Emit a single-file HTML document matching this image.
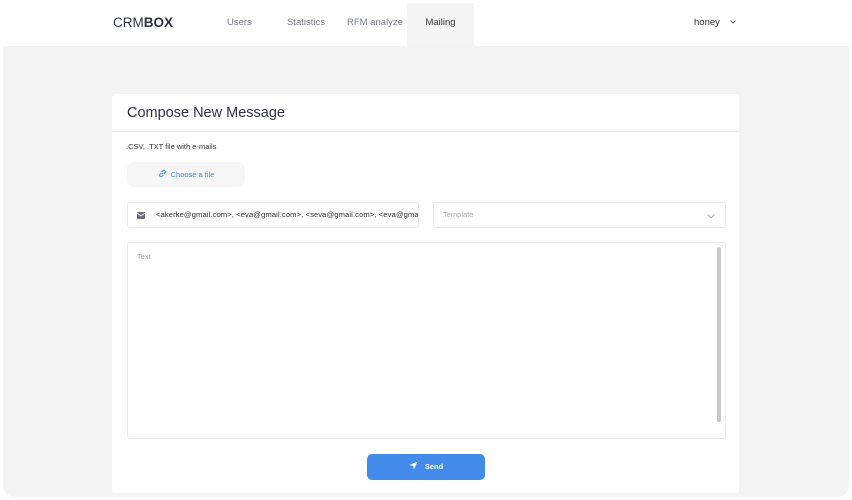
<!DOCTYPE html>
<html><head><style>
*{box-sizing:border-box;margin:0;padding:0}
body{width:852px;height:500px;background:#fff;font-family:"Liberation Sans",sans-serif;position:relative;overflow:hidden;color:#333}
.hdr{position:absolute;left:0;top:0;width:852px;height:46px;background:#fff}
.logo{position:absolute;left:113px;top:15px;font-size:13.5px;color:#2f3142}
.logo b{font-weight:700}
.nav{position:absolute;top:17px;font-size:9.5px;color:#7a7d86}
.mail{position:absolute;left:407px;top:3px;width:67px;height:43px;background:#f4f4f4;font-size:9.5px;color:#333;text-align:center;line-height:39px}
.grey{position:absolute;left:3px;top:46px;width:846px;height:451px;background:#f3f3f3;border-radius:0 0 12px 12px}
.card{position:absolute;left:112px;top:94px;width:627px;height:399px;background:#fff;border-radius:3px}
.title{position:absolute;left:15px;top:11px;font-size:14.5px;color:#2f3142}
.sep{position:absolute;left:0;top:37px;width:627px;height:1px;background:#ececec}
.lbl{position:absolute;left:14px;top:48px;font-size:7.5px;color:#333}
.choose{position:absolute;left:15px;top:68px;width:118px;height:25px;background:#f6f6f6;border-radius:7px;color:#3f8ae8;font-size:7.5px;text-align:center;line-height:25px}
.inp{position:absolute;left:15px;top:108px;width:292px;height:26px;border:1px solid #ececec;border-radius:3px;font-size:7.6px;letter-spacing:0.1px;line-height:24px;padding-left:28px;white-space:nowrap;overflow:hidden;color:#333}
.tpl{position:absolute;left:321px;top:108px;width:293px;height:26px;border:1px solid #ececec;border-radius:3px;font-size:7.5px;line-height:24px;padding-left:9px;color:#aaa}
.txt{position:absolute;left:15px;top:148px;width:599px;height:197px;border:1px solid #ececec;border-radius:3px;font-size:7.5px;color:#aaa;padding:9px}
.sb{position:absolute;right:4px;top:4px;width:4px;height:175px;background:#c9c9c9;border-radius:2px}
.send{position:absolute;left:255px;top:360px;width:118px;height:26px;background:#428bea;border-radius:5px;color:#fff;font-size:7.5px;font-weight:700;text-align:center;line-height:26px}
</style></head><body>
<div class="hdr">
<div class="logo">CRM<b>BOX</b></div>
<div class="nav" style="left:227px">Users</div>
<div class="nav" style="left:287px">Statistics</div>
<div class="nav" style="left:347px">RFM analyze</div>
<div class="mail">Mailing</div>
<div class="nav" style="left:694px;color:#333">honey</div>
<svg width="6" height="4" viewBox="0 0 6 4" style="position:absolute;left:730px;top:20px"><path d="M0.5 0.5L3 3L5.5 0.5" stroke="#555" stroke-width="0.9" fill="none"/></svg>
</div>
<div class="grey"></div>
<div class="card">
<div class="title">Compose New Message</div>
<div class="sep"></div>
<div class="lbl">.CSV, .TXT file with e-mails</div>
<div class="choose"><svg width="9" height="9" viewBox="0 0 10 10" style="vertical-align:-1px;margin-right:4px"><path d="M4.2 5.8L5.8 4.2M3.5 4.5L2.3 5.7a1.6 1.6 0 0 0 2.3 2.3L5.8 6.8M6.5 5.5L7.7 4.3a1.6 1.6 0 0 0-2.3-2.3L4.2 3.2" stroke="#3f8ae8" stroke-width="1.1" fill="none"/></svg>Choose a file</div>
<div class="inp"><svg width="8" height="7" viewBox="0 0 8 7" style="position:absolute;left:9px;top:9px"><rect width="8" height="7" rx="0.5" fill="#6b6e76"/><path d="M0 1L4 4L8 1" stroke="#fff" stroke-width="0.8" fill="none"/></svg>&lt;akerke@gmail.com&gt;, &lt;eva@gmail.com&gt;, &lt;seva@gmail.com&gt;, &lt;eva@gmail.com&gt;</div>
<div class="tpl">Template<svg width="8" height="5" viewBox="0 0 8 5" style="position:absolute;right:10px;top:11px"><path d="M0.5 0.5L4 4L7.5 0.5" stroke="#aaa" stroke-width="0.9" fill="none"/></svg></div>
<div class="txt">Text<div class="sb"></div></div>
<div class="send"><svg width="9" height="9" viewBox="0 0 10 10" style="vertical-align:-1px;margin-right:7px"><path d="M9.5 0.5L0.5 4.5L4.5 5.5L5.5 9.5Z" fill="#fff"/></svg>Send</div>
</div>
</body></html>
